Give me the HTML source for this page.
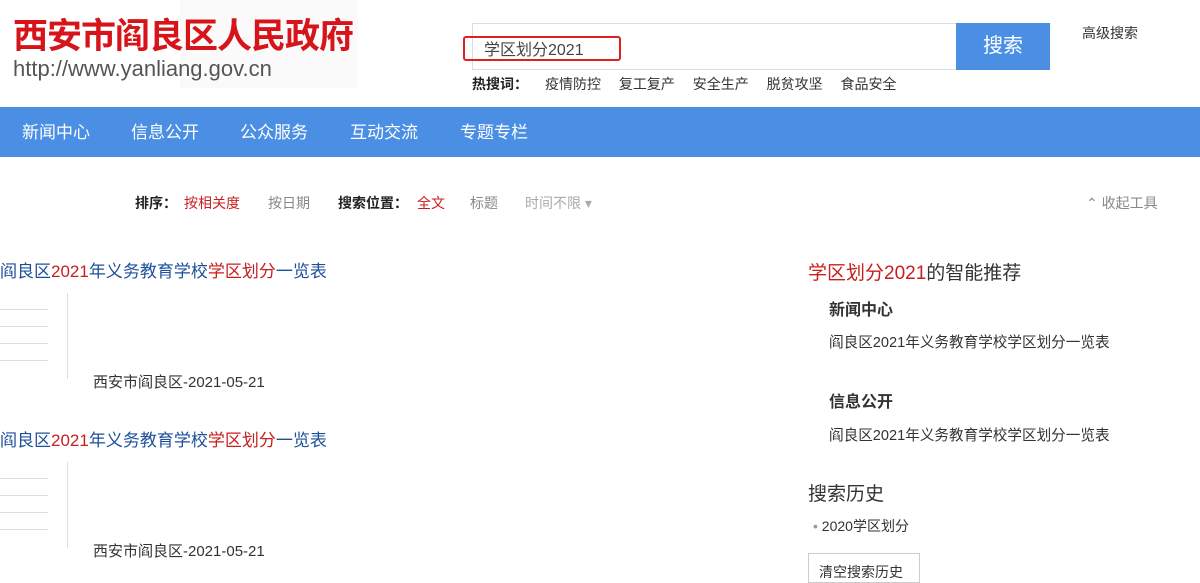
<!DOCTYPE html>
<html><head><meta charset="utf-8"><style>
*{margin:0;padding:0;box-sizing:border-box}
body{width:1200px;height:569px;overflow:hidden;background:#fff;font-family:"Liberation Sans","Noto Sans CJK SC",sans-serif;position:relative;color:#333}
.a{position:absolute;white-space:nowrap}
.nav{position:absolute;left:0;top:107px;width:1200px;height:50px;background:#4a8fe3}
.nav span{position:absolute;top:11px;color:#fff;font-size:17px}
.red{color:#c81e1e}.blue{color:#1d4f9a}
.thumb{position:absolute;left:0;width:68px;height:86px;border-right:1px solid #ddd}
.thumb i{display:block;height:1px;background:#ddd;margin-top:16px;width:48px}
</style></head><body>
<div class="a" style="left:180px;top:0;width:178px;height:88px;background:#fafafa"></div>
<div class="a" style="left:13px;top:8px;font-size:35px;font-weight:bold;color:#d7141a;letter-spacing:-1px">西安市阎良区人民政府</div>
<div class="a" style="left:13px;top:56px;font-size:22px;color:#555">http://www.yanliang.gov.cn</div>
<div class="a" style="left:472px;top:23px;width:484px;height:47px;border:1px solid #ddd;border-right:none"></div>
<div class="a" style="left:463px;top:36px;width:158px;height:25px;border:2px solid #e02020;border-radius:3px"></div>
<div class="a" style="left:484px;top:36px;font-size:16px;color:#444">学区划分2021</div>
<div class="a" style="left:956px;top:23px;width:94px;height:47px;background:#4a8fe3;color:#fff;font-size:20px;text-align:center;line-height:47px">搜索</div>
<div class="a" style="left:1082px;top:23px;font-size:14px;color:#333">高级搜索</div>
<div class="a" style="left:472px;top:74px;font-size:14px;color:#222"><b>热搜词：</b></div>
<div class="a" style="left:545px;top:74px;font-size:14px;color:#333;word-spacing:14px">疫情防控 复工复产 安全生产 脱贫攻坚 食品安全</div>
<div class="nav"><span style="left:22px">新闻中心</span><span style="left:131px">信息公开</span><span style="left:240px">公众服务</span><span style="left:350px">互动交流</span><span style="left:460px">专题专栏</span></div>
<div class="a" style="left:135px;top:193px;font-size:14px;color:#222"><b>排序：</b></div>
<div class="a red" style="left:184px;top:193px;font-size:14px">按相关度</div>
<div class="a" style="left:268px;top:193px;font-size:14px;color:#888">按日期</div>
<div class="a" style="left:338px;top:193px;font-size:14px;color:#222"><b>搜索位置：</b></div>
<div class="a red" style="left:417px;top:193px;font-size:14px">全文</div>
<div class="a" style="left:470px;top:193px;font-size:14px;color:#888">标题</div>
<div class="a" style="left:525px;top:193px;font-size:14px;color:#aaa">时间不限 ▾</div>
<div class="a" style="left:1086px;top:193px;font-size:14px;color:#888">⌃ 收起工具</div>

<div class="a blue" style="left:0;top:257px;font-size:17px">阎良区<span class="red">2021</span>年义务教育学校<span class="red">学区划分</span>一览表</div>
<div class="thumb" style="top:293px"><i></i><i></i><i></i><i></i></div>
<div class="a" style="left:93px;top:371px;font-size:15px;color:#333">西安市阎良区-2021-05-21</div>
<div class="a blue" style="left:0;top:426px;font-size:17px">阎良区<span class="red">2021</span>年义务教育学校<span class="red">学区划分</span>一览表</div>
<div class="thumb" style="top:462px"><i></i><i></i><i></i><i></i></div>
<div class="a" style="left:93px;top:540px;font-size:15px;color:#333">西安市阎良区-2021-05-21</div>

<div class="a" style="left:808px;top:258px;font-size:19px;color:#333"><span class="red">学区划分2021</span>的智能推荐</div>
<div class="a" style="left:829px;top:296px;font-size:16px;font-weight:bold;color:#333">新闻中心</div>
<div class="a" style="left:829px;top:331px;font-size:14.6px;color:#333">阎良区2021年义务教育学校学区划分一览表</div>
<div class="a" style="left:829px;top:388px;font-size:16px;font-weight:bold;color:#333">信息公开</div>
<div class="a" style="left:829px;top:424px;font-size:14.6px;color:#333">阎良区2021年义务教育学校学区划分一览表</div>
<div class="a" style="left:808px;top:479px;font-size:19px;color:#333">搜索历史</div>
<div class="a" style="left:813px;top:516px;font-size:14px;color:#333"><span style="color:#999">•</span> 2020学区划分</div>
<div class="a" style="left:808px;top:553px;width:112px;height:30px;border:1px solid #ccc;font-size:14px;padding:8px 0 0 10px">清空搜索历史</div>
</body></html>
